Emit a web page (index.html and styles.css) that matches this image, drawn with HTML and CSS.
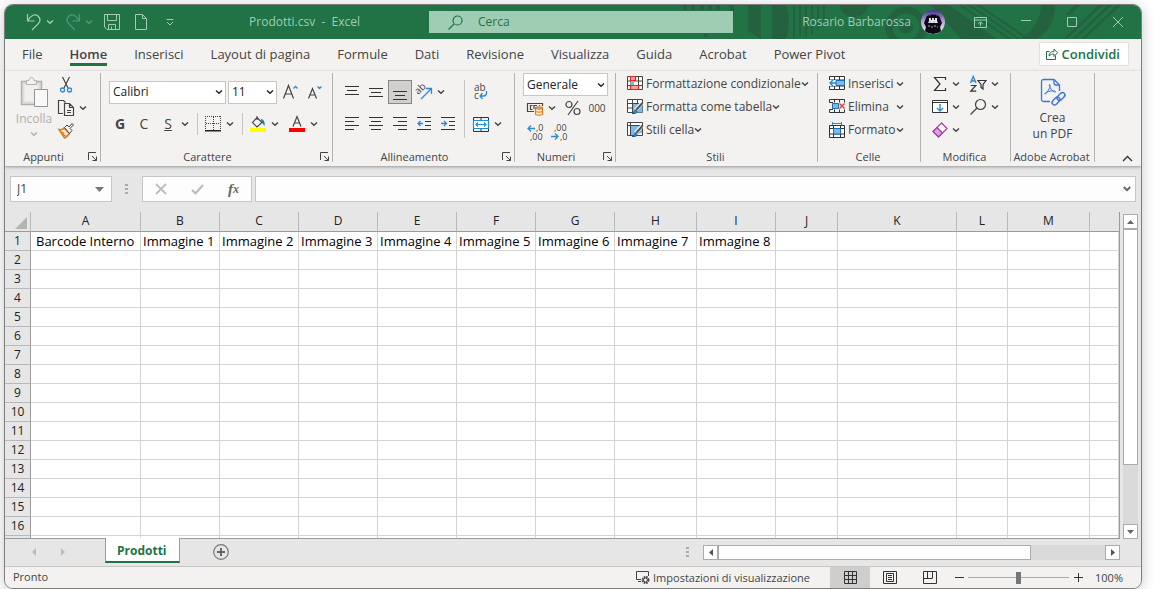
FILE: index.html
```
<!DOCTYPE html>
<html lang="it">
<head>
<meta charset="utf-8">
<title>Prodotti.csv - Excel</title>
<link rel="stylesheet" href="styles.css">
</head>
<body>
<svg class="defs" width="0" height="0" aria-hidden="true">
  <symbol id="chev" viewBox="0 0 8 6"><path d="M1 1.500 4 4.300l3-2.800" fill="none" stroke="currentColor" stroke-width="1.400"/></symbol>
  <symbol id="launch" viewBox="0 0 10 10"><path d="M.5 8V.5H8M4 4l4.500 4.500M8.500 4.500v4h-4" fill="none" stroke="currentColor"/></symbol>
</svg>
<div class="window">
  <header class="titlebar">
    <svg class="pattern" viewBox="0 0 466 34" width="466" height="34" aria-hidden="true">
      <g fill="#24623f">
        <path d="M8 0h4v5H8zM16 0h4v5h-4zM25 0h4v5h-4zM33 0h4v5h-4zM41 0h4v5h-4zM29 29h4v3h-4zM53 0h6v13zM73 0h13v34L73 26zM97 0h14c4 10 4 24 0 34H97z"/>
        <path d="M118 0h2v34h-2zM124 0h2v32h-2zM130 0h2v32h-2zM136 0h2v30h-2zM142 0h2v24h-2zM148 0h2v16h-2z"/>
        <path d="M165 0h28a14 12 0 0 1-28 0zM256 0h18l48 34h-36zM283 0h4l50 34h-4zM292 0h4l50 34h-4zM301 0h4l50 34h-4z"/>
        <path d="M366 0h14c1 14-6 26-18 34h-16c12-8 20-20 20-34zM388 34 424 0h4l-36 34zM397 34 433 0h4l-36 34zM406 34 442 0h4l-36 34zM390 10 400 0h5l-10 10z"/>
      </g>
      <circle cx="231" cy="22" r="17" fill="none" stroke="#24623f" stroke-width="7"/>
      <circle cx="231" cy="22" r="7" fill="#24623f"/>
    </svg>
    <div class="title-left">
      <div class="quick">
        <button aria-label="Annulla"><svg width="16" height="18"><path d="M1.500 1v7h7M2 7.500C5 2 9 .5 12 3c3 3 2 6 0 8l-6 6" fill="none" stroke="currentColor" stroke-width="1.200"/></svg></button>
        <button aria-label="Opzioni annulla" class="q-chev"><svg width="8" height="6"><use href="#chev"/></svg></button>
        <button aria-label="Ripeti" class="faded q-redo"><svg width="16" height="18"><path d="M14.500 1v7h-7M14 7.500C11 2 7 .5 4 3c-3 3-2 6 0 8l6 6" fill="none" stroke="currentColor" stroke-width="1.200"/></svg></button>
        <button aria-label="Opzioni ripeti" class="faded q-chev"><svg width="8" height="6"><use href="#chev"/></svg></button>
        <button aria-label="Salva" class="q-save"><svg width="16" height="16"><path d="M.5.5h15v15H3L.5 13zM3.500.5v6h9v-6M4.500 15.500v-5h7v5M7.500 12.500v3" fill="none" stroke="currentColor"/></svg></button>
        <button aria-label="Nuovo" class="q-new"><svg width="12" height="16"><path d="M.5.5h7l4 4v11H.5zM7.500.5v4h4" fill="none" stroke="currentColor"/></svg></button>
        <button aria-label="Personalizza" class="q-more"><svg width="8" height="7"><path d="M.5.5h7M1 3l3 3 3-3" fill="none" stroke="currentColor"/></svg></button>
      </div>
      <h1>Prodotti.csv&nbsp; -&nbsp; Excel</h1>
    </div>
    <label class="search"><svg width="15" height="15"><path d="M.5 14.500 6 9" stroke="currentColor" stroke-width="1.300"/><circle cx="9.500" cy="5.500" r="4.500" fill="none" stroke="currentColor" stroke-width="1.200"/></svg><input type="search" placeholder="Cerca" aria-label="Cerca"></label>
    <div class="title-right">
      <span class="user">Rosario Barbarossa</span>
      <svg class="avatar" width="24" height="24" viewBox="0 0 24 24" role="img" aria-label="Foto profilo"><defs><linearGradient id="av" x1="0" y1="0" x2="0" y2="1"><stop offset="0" stop-color="#43308f"/><stop offset=".5" stop-color="#b9a8dc"/><stop offset="1" stop-color="#eee"/></linearGradient></defs><circle cx="12" cy="12" r="12" fill="url(#av)"/><path d="M5 8c1-5 13-5 14 0l2 5-2 4 1 4a12 12 0 0 1-16 0l1-4-2-4z" fill="#0d0915"/><path d="M8 8h2v2h1V8h2v2h1V8h2v3l1 2H7l1-2z" fill="#e8e4f2"/><path d="M8 12h2m2 0h2M7 16h2m1 1h2m1-1h2m1 1h1" stroke="#a9a0c4"/><path d="M8 5h2m1-1h3m1 1h1" stroke="#6a5bab"/></svg>
      <button aria-label="Opzioni barra multifunzione"><svg width="13" height="11"><path d="M.5.5h12v10H.5zM.5 3h12M6.500 9V5M4.500 6.800l2-2 2 2" fill="none" stroke="currentColor"/></svg></button>
      <button aria-label="Riduci a icona"><svg width="10" height="10"><path d="M0 3.500h10" stroke="currentColor"/></svg></button>
      <button aria-label="Ingrandisci"><svg width="10" height="10"><path d="M.5.5h9v9h-9z" fill="none" stroke="currentColor"/></svg></button>
      <button aria-label="Chiudi"><svg width="10" height="10"><path d="m0 0 10 10M10 0 0 10" stroke="currentColor"/></svg></button>
    </div>
  </header>

  <nav class="tabs">
    <button>File</button><button class="active">Home</button><button>Inserisci</button><button>Layout di pagina</button><button>Formule</button><button>Dati</button><button>Revisione</button><button>Visualizza</button><button>Guida</button><button>Acrobat</button><button>Power Pivot</button>
    <button class="share"><svg width="12" height="12"><path d="M3.500 3.500h-3v8h9v-4M3 8c0-3 2-4.500 5-4.500v-2.500l3.500 3.800L8 8.500V6C6 6 4.500 6.500 3 8z" fill="none" stroke="currentColor"/></svg>Condividi</button>
  </nav>

  <div class="ribbon">
    <section class="group g-clip">
      <div class="body clip">
        <button class="paste" disabled>
          <svg width="28" height="31"><path d="M1.500 4.500h20v23h-20z" fill="#dcdcdc" stroke="#b3b0ad" stroke-width="1.500"/><path d="M4.500 7.500h14v17h-14z" fill="#f0efee"/><path d="M6.500 7.500v-4h2.500c.5-4 4.500-4 5 0h2.500v4z" fill="#f3f2f1" stroke="#b3b0ad"/><path d="M14.500 12.500h13v17h-13z" fill="#f8f8f8" stroke="#979593"/></svg>
          <span>Incolla</span>
          <svg width="8" height="6"><use href="#chev"/></svg>
        </button>
        <div class="clip-tools">
          <button aria-label="Taglia"><svg width="16" height="16"><path d="M4.500 0 10 11M11.500 0 6 11" stroke="#444" stroke-width="1.200"/><circle cx="4.500" cy="13" r="2" fill="none" stroke="#2b8bd0" stroke-width="1.300"/><circle cx="11.500" cy="13" r="2" fill="none" stroke="#2b8bd0" stroke-width="1.300"/></svg></button>
          <div class="pair"><button aria-label="Copia"><svg width="16" height="16"><path d="M5 13.500H.5V.5h5l2 2M6.500 3.500h5l4 4v8h-9zM11.500 3.500v4h4M9 10.500h4M9 12.500h4" fill="none" stroke="#444" stroke-width="1.200"/></svg></button><button aria-label="Opzioni copia"><svg width="8" height="6"><use href="#chev"/></svg></button></div>
          <button aria-label="Copia formato"><svg width="16" height="16"><path d="M1 6.500c3 .5 4 0 5-1.500l5.500 5.500c-1 1.500-3 3.500-5 4.500z" fill="#fbe3cb" stroke="#e07b1a" stroke-width="1.500"/><path d="M3 9l3 1-1 2 3 1" stroke="#e07b1a" fill="none"/><path d="M6.500 4.500 9 2l2 2 3-3.500 1.500 1.500L12 5.500l2 2-2.500 3z" fill="#f3f2f1" stroke="#444"/></svg></button>
        </div>
      </div>
      <footer><h2>Appunti</h2><button aria-label="Apri Appunti"><svg width="10" height="10"><use href="#launch"/></svg></button></footer>
    </section>

    <section class="group g-font">
      <div class="body rows">
        <div class="row">
          <span class="combo c-font"><select aria-label="Tipo di carattere"><option>Calibri</option></select><svg width="8" height="6"><use href="#chev"/></svg></span>
          <span class="combo c-size"><select aria-label="Dimensione carattere"><option>11</option></select><svg width="8" height="6"><use href="#chev"/></svg></span>
          <button class="tool grow" aria-label="Aumenta dimensione"><svg width="16" height="16"><path d="m.5 14.500 5-13 5 13M2.500 10h6" fill="none" stroke="#444" stroke-width="1.200"/><path d="m10.500 4.500 2-2 2 2" fill="none" stroke="#2b8bd0" stroke-width="1.300"/></svg></button>
          <button class="tool" aria-label="Riduci dimensione"><svg width="16" height="16"><path d="m1.500 14.500 4-10 4 10M3 11h5" fill="none" stroke="#444" stroke-width="1.200"/><path d="m10.500 2.500 2 2 2-2" fill="none" stroke="#2b8bd0" stroke-width="1.300"/></svg></button>
        </div>
        <div class="row">
          <button class="tool letter bold">G</button><button class="tool letter">C</button><button class="tool letter under">S</button><button class="drop" aria-label="Opzioni sottolineato"><svg width="8" height="6"><use href="#chev"/></svg></button>
          <i class="sep"></i>
          <button class="tool" aria-label="Bordi"><svg width="16" height="16"><path d="M0 .5h16M.5 0v14M15.500 0v14M8.500 1v13M1 7.500h14" stroke="#444" stroke-dasharray="1 1"/><path d="M0 14.800h16" stroke="#222" stroke-width="1.500"/></svg></button><button class="drop" aria-label="Opzioni bordi"><svg width="8" height="6"><use href="#chev"/></svg></button>
          <i class="sep"></i>
          <button class="tool" aria-label="Colore riempimento"><svg width="16" height="16"><path d="m7 1.500 5 5-5 4.500-4.500-4.500zM7 4V0" fill="none" stroke="#444" stroke-width="1.100"/><path d="M11 3c3 .5 4 3 3.500 7L11.500 6z" fill="#2174ad"/><path d="M0 12h16v4H0z" fill="#ff0"/></svg></button><button class="drop" aria-label="Opzioni riempimento"><svg width="8" height="6"><use href="#chev"/></svg></button>
          <button class="tool ink" aria-label="Colore carattere"><svg width="16" height="16"><path d="m4 10.500 4-10 4 10M5.500 7h5" fill="none" stroke="#444" stroke-width="1.200"/><path d="M0 12h16v4H0z" fill="red"/></svg></button><button class="drop" aria-label="Opzioni colore carattere"><svg width="8" height="6"><use href="#chev"/></svg></button>
        </div>
      </div>
      <footer><h2>Carattere</h2><button aria-label="Apri Carattere"><svg width="10" height="10"><use href="#launch"/></svg></button></footer>
    </section>

    <section class="group g-align">
      <div class="body align">
        <div class="rows">
          <div class="row">
            <button class="tool" aria-label="Allinea in alto"><svg width="14" height="16"><path d="M0 2.500h14M2 6.500h10M0 10.500h14" stroke="#333"/></svg></button>
            <button class="tool" aria-label="Allinea al centro verticale"><svg width="14" height="16"><path d="M0 4.500h14M2 8.500h10M0 12.500h14" stroke="#333"/></svg></button>
            <button class="tool on" aria-label="Allinea in basso"><svg width="14" height="16"><path d="M0 7.500h14M2 11.500h10M0 15.500h14" stroke="#333"/></svg></button>
            <button class="tool" aria-label="Orientamento"><svg width="16" height="16"><text x="1" y="10" transform="rotate(-45 3 9)" class="mini-ab">ab</text><path d="m5 15 10-10M10 4.500h5.500V10" fill="none" stroke="#2b8bd0" stroke-width="1.300"/></svg></button><button class="drop" aria-label="Opzioni orientamento"><svg width="8" height="6"><use href="#chev"/></svg></button>
          </div>
          <div class="row">
            <button class="tool" aria-label="Allinea a sinistra"><svg width="14" height="14"><path d="M0 .5h14M0 4.500h9M0 8.500h14M0 12.500h9" stroke="#333"/></svg></button>
            <button class="tool" aria-label="Allinea al centro"><svg width="14" height="14"><path d="M0 .5h14M2 4.500h10M0 8.500h14M2 12.500h10" stroke="#333"/></svg></button>
            <button class="tool" aria-label="Allinea a destra"><svg width="14" height="14"><path d="M0 .5h14M5 4.500h9M0 8.500h14M5 12.500h9" stroke="#333"/></svg></button>
            <button class="tool" aria-label="Riduci rientro"><svg width="14" height="14"><path d="M0 .5h14M8 4.500h6M8 8.500h6M0 12.500h14" stroke="#333"/><path d="M.8 6.500H6M3.500 4 1 6.500 3.500 9" fill="none" stroke="#2b8bd0" stroke-width="1.300"/></svg></button>
            <button class="tool" aria-label="Aumenta rientro"><svg width="14" height="14"><path d="M0 .5h14M8 4.500h6M8 8.500h6M0 12.500h14" stroke="#333"/><path d="M0 6.500h5.500M3 4l2.500 2.500L3 9" fill="none" stroke="#2b8bd0" stroke-width="1.300"/></svg></button>
          </div>
        </div>
        <i class="sep tall"></i>
        <div class="rows">
          <div class="row"><button class="tool" aria-label="Testo a capo"><svg width="16" height="18"><text x="1" y="8" class="mini-ab">ab</text><text x="1" y="16" class="mini-ab">c</text><path d="M13.500 8v2c0 2-1 3-3 3H7M9.500 10 7 13l2.500 3" fill="none" stroke="#2b8bd0" stroke-width="1.300"/></svg></button></div>
          <div class="row"><button class="tool" aria-label="Unisci e centra"><svg width="16" height="15"><path d="M.5 3.500v-3h15v3M.5 11.500v3h15v-3M8 0v3M8 12v3" fill="none" stroke="#333"/><path d="M.5 3.500h15v8H.5z" fill="#fff" stroke="#2b8bd0" stroke-width="1.200"/><path d="M3 7.500h10M5 5.500l-2 2 2 2M11 5.500l2 2-2 2" fill="none" stroke="#2b8bd0" stroke-width="1.200"/></svg></button><button class="drop" aria-label="Opzioni unione"><svg width="8" height="6"><use href="#chev"/></svg></button></div>
        </div>
      </div>
      <footer><h2>Allineamento</h2><button aria-label="Apri Allineamento"><svg width="10" height="10"><use href="#launch"/></svg></button></footer>
    </section>

    <section class="group g-num">
      <div class="body numbers">
        <span class="combo c-num"><select aria-label="Formato numero"><option>Generale</option></select><svg width="8" height="6"><use href="#chev"/></svg></span>
        <div class="row">
          <button class="tool" aria-label="Formato contabilità"><svg width="16" height="16"><path d="M7 11.500H.5v-8h15V6M5.500 5.500h-2v4h2M7 9V5.500h3M12 5.500h1" fill="none" stroke="#444" stroke-width="1.200"/><path d="M8.500 8v6c0 1.500 7 1.500 7 0V8z" fill="#fdf0e0" stroke="#e07b1a" stroke-width="1.200"/><path d="M8.500 8c0 1.500 7 1.500 7 0s-7-1.500-7 0M8.500 11c0 1.500 7 1.500 7 0" fill="none" stroke="#e07b1a" stroke-width="1.200"/></svg></button><button class="drop" aria-label="Opzioni valuta"><svg width="8" height="6"><use href="#chev"/></svg></button>
          <button class="tool percent-style" aria-label="Percentuale"><svg width="16" height="16"><path d="M13 1 3 15" stroke="#444" stroke-width="1.200"/><circle cx="4" cy="4.500" r="3" fill="none" stroke="#444" stroke-width="1.200"/><circle cx="12" cy="11.500" r="3" fill="none" stroke="#444" stroke-width="1.200"/></svg></button>
          <button class="tool zeros" aria-label="Stile separatore">000</button>
        </div>
        <div class="row">
          <button class="tool" aria-label="Aumenta decimali"><svg width="16" height="18"><path d="M1 5.500h7M4 2.500l-3 3 3 3" fill="none" stroke="#2b8bd0" stroke-width="1.300"/><text x="9" y="8" class="mini-num">,0</text><text x="3" y="17" class="mini-num">,00</text></svg></button>
          <button class="tool" aria-label="Diminuisci decimali"><svg width="16" height="18"><path d="M0 13.500h7M4 10.500l3 3-3 3" fill="none" stroke="#2b8bd0" stroke-width="1.300"/><text x="3" y="8" class="mini-num">,00</text><text x="9" y="17" class="mini-num">,0</text></svg></button>
        </div>
      </div>
      <footer><h2>Numeri</h2><button aria-label="Apri Numeri"><svg width="10" height="10"><use href="#launch"/></svg></button></footer>
    </section>

    <section class="group g-style">
      <div class="body list">
        <button><svg width="16" height="15"><path d="M.5.5h15v13H.5zM.5 5h15M.5 9.500h15M4 .5v13M11.500.5v13" fill="#fff" stroke="#444"/><path d="M3.500.5h5v4h-5zM3.500 9.500h8v4h-8z" fill="#ff9b9b" stroke="#d92c2c" stroke-width="1.200"/><path d="M4 5h3v4H4z" fill="#7cb9ea"/></svg><span>Formattazione condizionale</span><svg width="8" height="6"><use href="#chev"/></svg></button>
        <button><svg width="16" height="15"><path d="M.5.5h15v13H.5zM.5 4.500h15M.5 9h15M5.500.5v13M10.500.5v13" fill="#fff" stroke="#444"/><path d="M6 5h9.500v8.500H6z" fill="#7cb9ea"/><path d="m15 4-6.500 7" stroke="#f3f2f1" stroke-width="4"/><path d="m15.500 4-6.500 7" stroke="#555" stroke-width="2"/><path d="M5 14.500c2 0 2-3 3.500-3.500l1.500 1.500c0 1.500-2 2.500-5 2z" fill="#2b8bd0" stroke="#1a5f96"/></svg><span>Formatta come tabella</span><svg width="8" height="6"><use href="#chev"/></svg></button>
        <button><svg width="16" height="15"><path d="M.5.5h15v13H.5zM.5 3.500h15M3.500.5v13" fill="#fff" stroke="#444"/><path d="M4 4h11v7L6 13H4z" fill="#7cb9ea"/><path d="m15 4-6.500 7" stroke="#f3f2f1" stroke-width="4"/><path d="m15.500 4-6.500 7" stroke="#555" stroke-width="2"/><path d="M5 14.500c2 0 2-3 3.500-3.500l1.500 1.500c0 1.500-2 2.500-5 2z" fill="#2b8bd0" stroke="#1a5f96"/></svg><span>Stili cella</span><svg width="8" height="6"><use href="#chev"/></svg></button>
      </div>
      <footer><h2>Stili</h2></footer>
    </section>

    <section class="group g-cells">
      <div class="body list cells">
        <button><svg width="16" height="15"><path d="M.5.5h15v13H.5zM.5 4h15M.5 10h15M5.500.5v13M10.500.5v13" fill="#fff" stroke="#333"/><path d="M0 4h8v6H0z" fill="#f3f2f1"/><path d="M7 4.500h8.500v5H7z" fill="#7cb9ea" stroke="#1a6fb5"/><path d="M1 7h7M4 4 1 7l3 3" fill="none" stroke="#2b8bd0" stroke-width="1.400"/></svg><span>Inserisci</span><svg width="8" height="6"><use href="#chev"/></svg></button>
        <button><svg width="16" height="15"><path d="M.5 3.500v-3h15v3M.5 10.500v3h15v-3M.5 3.500H4M.5 10.500H4M5.500.5v3M10.500.5v3M5.500 10.500v3M10.500 10.500v3" fill="none" stroke="#333"/><path d="M3.500 4.500h6v5h-6z" fill="#7cb9ea" stroke="#1a6fb5"/><path d="m10.500 4.500 5 5m0-5-5 5" stroke="#e03c31" stroke-width="1.400"/></svg><span>Elimina</span><svg width="8" height="6"><use href="#chev"/></svg></button>
        <button><svg width="16" height="16"><path d="M.5 3.500h15v12H.5zM.5 6.500h15M.5 12h15M4.500 3.500v12M11.500 3.500v12" fill="#fff" stroke="#333"/><path d="M4.500 6.500h7v5.500h-7z" fill="#7cb9ea" stroke="#1a6fb5"/><path d="M3.500 1.500h9M3.500 0v3M12.500 0v3" stroke="#2b8bd0"/></svg><span>Formato</span><svg width="8" height="6"><use href="#chev"/></svg></button>
      </div>
      <footer><h2>Celle</h2></footer>
    </section>

    <section class="group g-edit">
      <div class="body edit">
        <button aria-label="Somma"><svg width="16" height="16"><path d="M13.500 4V1.500h-11L8 8l-5.500 6.500h11V12" fill="none" stroke="#333" stroke-width="1.200"/></svg><svg width="8" height="6"><use href="#chev"/></svg></button>
        <button aria-label="Ordina e filtra"><svg width="17" height="16"><path d="m.5 7 2.700-6.500L6 7M1.500 5H5" fill="none" stroke="#2b8bd0" stroke-width="1.400"/><path d="M.8 9.500h5L.8 15.200h5.400" fill="none" stroke="#333" stroke-width="1.200"/><path d="M8 4.500h8L13 8.500v4.500l-2-1.500v-3z" fill="none" stroke="#333" stroke-width="1.200"/></svg><svg width="8" height="6"><use href="#chev"/></svg></button>
        <button aria-label="Riempimento"><svg width="16" height="16"><path d="M.5 1.500h15v12H.5zM.5 3.500h15" fill="#fff" stroke="#333"/><path d="M8 5v7M5 9l3 3 3-3" fill="none" stroke="#2b8bd0" stroke-width="1.400"/></svg><svg width="8" height="6"><use href="#chev"/></svg></button>
        <button aria-label="Trova e seleziona"><svg width="17" height="16"><circle cx="10.500" cy="5.500" r="5" fill="none" stroke="#444" stroke-width="1.200"/><path d="M.5 15.500 7 9" stroke="#444" stroke-width="1.200"/></svg><svg width="8" height="6"><use href="#chev"/></svg></button>
        <button aria-label="Cancella"><svg width="16" height="16"><path d="M9.500 1 15 6.500 6.500 15 1 9.500z" fill="#fff" stroke="#a23ba5" stroke-width="1.200"/><path d="M5 5.500 10.500 11l-4 4L1 9.500z" fill="#dca0dd" stroke="#a23ba5" stroke-width="1.200"/></svg><svg width="8" height="6"><use href="#chev"/></svg></button>
      </div>
      <footer><h2>Modifica</h2></footer>
    </section>

    <section class="group g-pdf">
      <div class="body">
        <button class="pdf"><svg width="26" height="29"><path d="M10 23.500H3.500a2 2 0 0 1-2-2v-18a2 2 0 0 1 2-2H14l5.500 5.500v6M14 1.500v3.500a2 2 0 0 0 2 2h3.500" fill="none" stroke="#3b74dd" stroke-width="1.300"/><path d="M9.500 6.500c1.500 0 .5 4-3.500 9-2 1.500-1.500-.5 1-1.500 4-1.500 8-1.500 8.500-.5.500 1-2.500 1-4.500-2.500-1-1.500-2-3.500-1.500-4.500z" fill="none" stroke="#3b74dd"/><g fill="none" stroke="#3b74dd" stroke-width="1.400"><rect x="11.500" y="20.500" width="9" height="5" rx="2.500" transform="rotate(-45 16 23)"/><rect x="16.500" y="16" width="9" height="5" rx="2.500" transform="rotate(-45 21 18.500)"/></g></svg><span>Crea<br>un PDF</span></button>
      </div>
      <footer><h2>Adobe Acrobat</h2></footer>
    </section>
    <button class="collapse" aria-label="Comprimi barra multifunzione"><svg width="11" height="7"><path d="m1 6 4.500-4.500L10 6" fill="none" stroke="#333" stroke-width="1.300"/></svg></button>
  </div>

  <div class="formula">
    <label class="namebox"><input value="J1" aria-label="Casella nome"><svg width="9" height="5"><path d="M0 0h9L4.500 5z" fill="#777"/></svg></label>
    <i class="dots"></i>
    <div class="fx">
      <button aria-label="Annulla"><svg width="12" height="12"><path d="m1 1 10 10M11 1 1 11" stroke="#bcbcbc" stroke-width="1.800"/></svg></button>
      <button aria-label="Invio"><svg width="13" height="11"><path d="m1 6 3.500 3.500L12 1" fill="none" stroke="#bcbcbc" stroke-width="2.200"/></svg></button>
      <button class="fx-label" aria-label="Inserisci funzione">f<small>x</small></button>
    </div>
    <label class="entry"><input aria-label="Barra della formula"><svg width="8" height="6"><path d="m.8 1 3.200 3.200L7.200 1" fill="none" stroke="#666" stroke-width="2"/></svg></label>
  </div>

  <main class="sheet">
    <div class="grid">
      <table>
        <colgroup><col class="w-head"><col class="w-a"><col class="w-b"><col class="w-b"><col class="w-b"><col class="w-b"><col class="w-b"><col class="w-b"><col class="w-h"><col class="w-b"><col class="w-j"><col class="w-k"><col class="w-l"><col class="w-h"><col></colgroup>
        <thead><tr><th class="corner"><svg width="12" height="12"><path d="M12 0v12H0z" fill="#b4b4b4"/></svg></th><th>A<th>B<th>C<th>D<th>E<th>F<th>G<th>H<th>I<th>J<th>K<th>L<th>M<th></tr></thead>
        <tbody>
        <tr><th>1<td class="first">Barcode Interno<td>Immagine 1<td>Immagine 2<td>Immagine 3<td>Immagine 4<td>Immagine 5<td>Immagine 6<td>Immagine 7<td>Immagine 8<td><td><td><td><td>
        <tr><th>2<td><td><td><td><td><td><td><td><td><td><td><td><td><td>
        <tr><th>3<td><td><td><td><td><td><td><td><td><td><td><td><td><td>
        <tr><th>4<td><td><td><td><td><td><td><td><td><td><td><td><td><td>
        <tr><th>5<td><td><td><td><td><td><td><td><td><td><td><td><td><td>
        <tr><th>6<td><td><td><td><td><td><td><td><td><td><td><td><td><td>
        <tr><th>7<td><td><td><td><td><td><td><td><td><td><td><td><td><td>
        <tr><th>8<td><td><td><td><td><td><td><td><td><td><td><td><td><td>
        <tr><th>9<td><td><td><td><td><td><td><td><td><td><td><td><td><td>
        <tr><th>10<td><td><td><td><td><td><td><td><td><td><td><td><td><td>
        <tr><th>11<td><td><td><td><td><td><td><td><td><td><td><td><td><td>
        <tr><th>12<td><td><td><td><td><td><td><td><td><td><td><td><td><td>
        <tr><th>13<td><td><td><td><td><td><td><td><td><td><td><td><td><td>
        <tr><th>14<td><td><td><td><td><td><td><td><td><td><td><td><td><td>
        <tr><th>15<td><td><td><td><td><td><td><td><td><td><td><td><td><td>
        <tr><th>16<td><td><td><td><td><td><td><td><td><td><td><td><td><td>
        <tr><th><td><td><td><td><td><td><td><td><td><td><td><td><td><td>
        </tbody>
      </table>
    </div>
    <div class="vscroll">
      <button aria-label="Scorri in alto"><svg width="7" height="4"><path d="M0 4h7L3.500 0z" fill="#666"/></svg></button>
      <div class="track"><div class="thumb"></div></div>
      <button aria-label="Scorri in basso"><svg width="7" height="4"><path d="M0 0h7L3.500 4z" fill="#666"/></svg></button>
    </div>
  </main>

  <div class="sheetbar">
    <div class="sheet-left">
      <div class="sheet-nav"><button aria-label="Foglio precedente"><svg width="4" height="8"><path d="M4 0v8L0 4z" fill="#bbb"/></svg></button><button aria-label="Foglio successivo"><svg width="4" height="8"><path d="M0 0v8l4-4z" fill="#bbb"/></svg></button></div>
      <button class="sheet-tab">Prodotti</button>
      <button class="add" aria-label="Nuovo foglio"><svg width="16" height="16"><circle cx="8" cy="8" r="7.300" fill="none" stroke="#777" stroke-width="1.200"/><path d="M4 8h8M8 4v8" stroke="#666" stroke-width="2"/></svg></button>
    </div>
    <i class="dots"></i>
    <div class="hscroll">
      <button aria-label="Scorri a sinistra"><svg width="4" height="7"><path d="M4 0v7L0 3.500z" fill="#555"/></svg></button>
      <div class="track"><div class="thumb"></div></div>
      <button aria-label="Scorri a destra"><svg width="4" height="7"><path d="M0 0v7l4-3.500z" fill="#555"/></svg></button>
    </div>
  </div>

  <footer class="status">
    <span class="ready">Pronto</span>
    <button class="display"><svg width="14" height="14"><path d="M5 8.500H.5v-8h12V5M2 10.500h3" fill="none" stroke="#444"/><circle cx="9.500" cy="9" r="3" fill="none" stroke="#444" stroke-width="2" stroke-dasharray="1.600 .8"/><circle cx="9.500" cy="9" r="2" fill="none" stroke="#444"/></svg>Impostazioni di visualizzazione</button>
    <div class="views">
      <button class="on" aria-label="Normale"><svg width="13" height="13"><path d="M.5.5h12v12H.5zM.5 4.500h12M.5 8.500h12M4.500.5v12M8.500.5v12" fill="none" stroke="#333"/></svg></button>
      <button aria-label="Layout di pagina"><svg width="14" height="13"><path d="M.5.5h13v12H.5zM3.500 2.500h7v8h-7zM5 4.500h4M5 6.500h4M5 8.500h4" fill="none" stroke="#333"/></svg></button>
      <button aria-label="Anteprima interruzioni"><svg width="14" height="13"><path d="M.5.5h13v12H.5zM.5 7.500h9v-7M4.500.5v7" fill="none" stroke="#333"/></svg></button>
    </div>
    <div class="zoom">
      <button aria-label="Zoom indietro"><svg width="9" height="9"><path d="M0 4.500h9" stroke="#333"/></svg></button>
      <input type="range" min="0" max="100" value="50" aria-label="Zoom">
      <button aria-label="Zoom avanti"><svg width="9" height="9"><path d="M0 4.500h9M4.500 0v9" stroke="#333"/></svg></button>
      <button class="percent">100%</button>
    </div>
  </footer>
</div>
</body>
</html>
```
FILE: styles.css
```
* { box-sizing: border-box; }
body { margin: 0; background: #fff; color: #444; font: 12px/16px "Open Sans", "Noto Sans", sans-serif; overflow: hidden; }
button { display: flex; align-items: center; justify-content: center; margin: 0; padding: 0; border: 0; background: none; color: inherit; font: inherit; white-space: nowrap; flex: none; }
input, select { margin: 0; padding: 0; border: 0; background: none; color: inherit; font: inherit; min-width: 0; outline: 0; }
svg { display: block; flex: none; overflow: visible; }
h1, h2 { margin: 0; font: inherit; white-space: nowrap; }
.defs { position: absolute; }

.window { display: flex; flex-direction: column; height: calc(100vh - 4px); margin: 4px 17px 0 4px; border: 1px solid #7d7d7d; border-radius: 9px; overflow: hidden; background: #e6e6e6; box-shadow: 0 2px 14px rgba(0, 0, 0, .22); }

.titlebar { position: relative; display: grid; grid-template-columns: 424fr 304fr 408fr; align-items: center; height: 34px; flex: none; background: #217346; color: #a0cdb4; }
.pattern { position: absolute; right: 0; top: 0; overflow: hidden; }
.titlebar > :not(.pattern) { position: relative; }
.title-left { display: flex; align-items: center; }
.title-left h1 { flex: 1; padding-left: 6px; text-align: center; }
.quick { display: flex; align-items: center; padding-left: 21px; }
.q-chev { margin-left: 4px; }
.q-redo { margin-left: 11px; }
.q-save { margin-left: 11px; }
.q-new { margin-left: 15px; }
.q-more { margin-left: 19px; }
.faded { opacity: .4; }
.search { display: flex; align-items: center; gap: 15px; height: 22px; padding-left: 19px; background: #9fcdb3; color: #217346; }
.search input { flex: 1; }
.search input::placeholder { color: #217346; opacity: 1; }
.title-right { display: flex; align-items: center; justify-content: flex-end; }
.title-right button { width: 46px; height: 34px; }
.user { margin-right: 10px; white-space: nowrap; }
.avatar { margin-right: 12px; }

.tabs { display: flex; align-items: center; gap: 27px; height: 32px; flex: none; padding: 0 12px 2px 17px; background: #f3f2f1; font-size: 13px; }
.tabs button { height: 24px; border: solid transparent; border-width: 3px 0; }
.tabs .active { border-bottom-color: #217346; font-weight: 600; }
.tabs .share { margin-left: auto; gap: 4px; padding: 0 8px 0 6px; border: 1px solid #e1dfdd; border-radius: 2px; background: #fff; color: #217346; font-weight: 600; }

.ribbon { display: flex; flex: none; height: 95px; padding: 2px 0 4px; background: #f3f2f1; box-shadow: 0 1px 3px rgba(0, 0, 0, .35); position: relative; }
.group { display: flex; flex-direction: column; flex: none; border-right: 1px solid #b5b3b1; }
.g-clip { width: 96px; }
.g-font { width: 232px; }
.g-align { width: 182px; }
.g-num { width: 101px; }
.g-style { width: 202px; }
.g-cells { width: 103px; }
.g-edit { width: 90px; }
.g-pdf { width: 84px; }
.body { flex: 1; }
.group footer { display: flex; align-items: center; height: 10px; padding-right: 2px; font-size: 11px; }
.group footer h2 { flex: 1; text-align: center; }
.group footer h2:not(:last-child) { padding-right: 6px; }
.collapse { margin: auto 8px 0 auto; }

.clip { display: flex; gap: 6px; padding: 4px 0 0 11px; }
.paste { flex-direction: column; justify-content: flex-start; align-self: flex-start; width: 36px; color: #b1afad; }
.paste > span { margin: 3px 0 4px; }
.clip-tools { display: flex; flex-direction: column; gap: 7px; align-items: flex-start; }
.pair { display: flex; gap: 5px; }

.rows { display: flex; flex-direction: column; gap: 8px; }
.row { display: flex; align-items: center; height: 24px; }
.tool { width: 24px; height: 24px; }
.tool.on { border: 1px solid #8a8886; background: #d2d0ce; }
.drop { width: 10px; height: 24px; }
.sep { width: 1px; height: 22px; margin: 0 3px 0 7px; background: #c8c6c4; }
.letter { font-size: 14px; }
.bold { font-weight: 700; }
.under { text-decoration: underline; }
.ink { margin-left: 5px; }
.combo { display: grid; align-items: center; height: 23px; border: 1px solid #c8c6c4; background: #fff; color: #222; }
.combo select { grid-area: 1 / 1; width: 100%; height: 21px; padding-left: 3px; appearance: none; }
.combo svg { grid-area: 1 / 1; justify-self: end; margin-right: 2px; pointer-events: none; }
.c-font { width: 117px; margin-left: 1px; }
.c-size { width: 49px; margin-left: 2px; }
.c-num { width: 85px; }
.g-font .rows { padding: 7px 0 0 7px; }
.grow { margin-left: 2px; }
.align { display: flex; padding: 7px 0 0 7px; }
.sep.tall { height: 58px; margin: 0 4px; }
.mini-ab { font-size: 10px; fill: #444; }
.mini-num { font-size: 9px; fill: #444; }
.numbers { padding-left: 8px; }
.percent-style { margin-left: 4px; }
.zeros { font-size: 10px; }

.list { display: flex; flex-direction: column; align-items: flex-start; padding-left: 11px; }
.list button { height: 23px; padding-bottom: 2px; }
.list span { margin-left: 3px; }
.cells span { width: 48px; text-align: left; }

.edit { display: grid; grid-template-columns: 38px 40px; grid-auto-rows: 23px; padding-left: 11px; align-content: start; }
.edit button { gap: 4px; justify-content: flex-start; padding-bottom: 2px; }
.pdf { flex-direction: column; width: 100%; padding-top: 5px; gap: 3px; }

.formula { display: flex; align-items: stretch; flex: none; height: 26px; margin: 10px 5px 10px; }
.namebox, .fx, .entry { display: flex; align-items: center; border: 1px solid #c6c6c6; background: #fdfdfd; }
.namebox { width: 102px; padding: 0 7px 0 6px; }
.namebox input { flex: 1; }
.dots { width: 3px; height: 11px; align-self: center; background: repeating-linear-gradient(#aaa 0 2px, transparent 2px 4px); }
.formula .dots { margin: 0 14px 0 13px; }
.fx { width: 110px; justify-content: space-between; padding: 0 12px; }
.fx-label { font: italic bold 15px/20px "Liberation Serif", serif; color: #666; }
.fx-label small { font-size: 12px; }
.entry { flex: 1; margin-left: 3px; padding-right: 4px; }
.entry input { flex: 1; height: 100%; }

.sheet { display: flex; flex: 1; min-height: 0; }
.grid { flex: 1; overflow: hidden; border-right: 1px solid #9b9b9b; border-bottom: 1px solid #9b9b9b; background: #fff; }
table { width: 100%; table-layout: fixed; border-collapse: separate; border-spacing: 0; color: #000; }
.w-head { width: 26px; }
.w-a { width: 110px; }
.w-b { width: 79px; }
.w-h { width: 82px; }
.w-j { width: 62px; }
.w-k { width: 119px; }
.w-l { width: 51px; }
th, td { height: 19px; padding: 0; border: solid #d4d4d4; border-width: 0 1px 1px 0; font: 13px/18px "Open Sans", "Noto Sans", sans-serif; white-space: nowrap; }
td { padding-left: 2px; overflow: hidden; }
td.first { padding-left: 5px; }
th { background: #e6e6e6; border-color: #b8b8b8; color: #222; }
thead th { height: 20px; padding-bottom: 1px; font-size: 12px; border-bottom-color: #9b9b9b; }
tbody th { border-right-color: #9b9b9b; font-size: 12px; }
tr > th:last-child { border-right: 0; }
.corner svg { margin: 3px 0 0 10px; }

.vscroll { display: flex; flex-direction: column; width: 15px; margin: 2px 3px 0; }
.vscroll button, .hscroll button { width: 15px; height: 15px; border: 1px solid #ababab; background: #fff; }
.track { flex: 1; background: #dadada; }
.thumb { border: 1px solid #ababab; background: #fff; }
.vscroll .thumb { height: 80%; }
.hscroll .thumb { width: 81%; height: 15px; }

.sheetbar { display: flex; align-items: center; flex: none; height: 27px; }
.sheet-left { display: flex; align-items: flex-start; flex: 1; height: 27px; }
.sheet-nav { display: flex; gap: 25px; width: 100px; height: 26px; padding-left: 27px; align-items: center; }
.sheet-nav button { height: 26px; }
.sheet-tab { height: 25px; padding: 2px 12px 0 11px; margin-top: -1px; border: 1px solid #9b9b9b; border-width: 0 1px 2px; border-bottom-color: #217346; background: #fff; color: #217346; font-weight: 700; position: relative; }
.add { height: 26px; margin-left: 33px; }
.hscroll { display: flex; width: 417px; margin: 0 21px 0 14px; }

.status { display: flex; align-items: stretch; flex: none; height: 22px; border-top: 1px solid #c6c6c6; background: #f3f2f1; font-size: 11px; }
.ready { flex: 1; padding: 2px 8px; }
.display { gap: 3px; margin-right: 20px; }
.views { display: flex; }
.views button { width: 40px; }
.views .on { background: #d0cecc; }
.zoom { display: flex; align-items: center; padding: 0 18px 0 5px; }
.zoom input { width: 101px; height: 14px; margin: 0 5px 0 4px; appearance: none; background: linear-gradient(#aaa, #aaa) center / 100% 1px no-repeat; }
.zoom input::-webkit-slider-thumb { appearance: none; width: 5px; height: 12px; background: #777; }
.percent { margin-left: 12px; }
```
